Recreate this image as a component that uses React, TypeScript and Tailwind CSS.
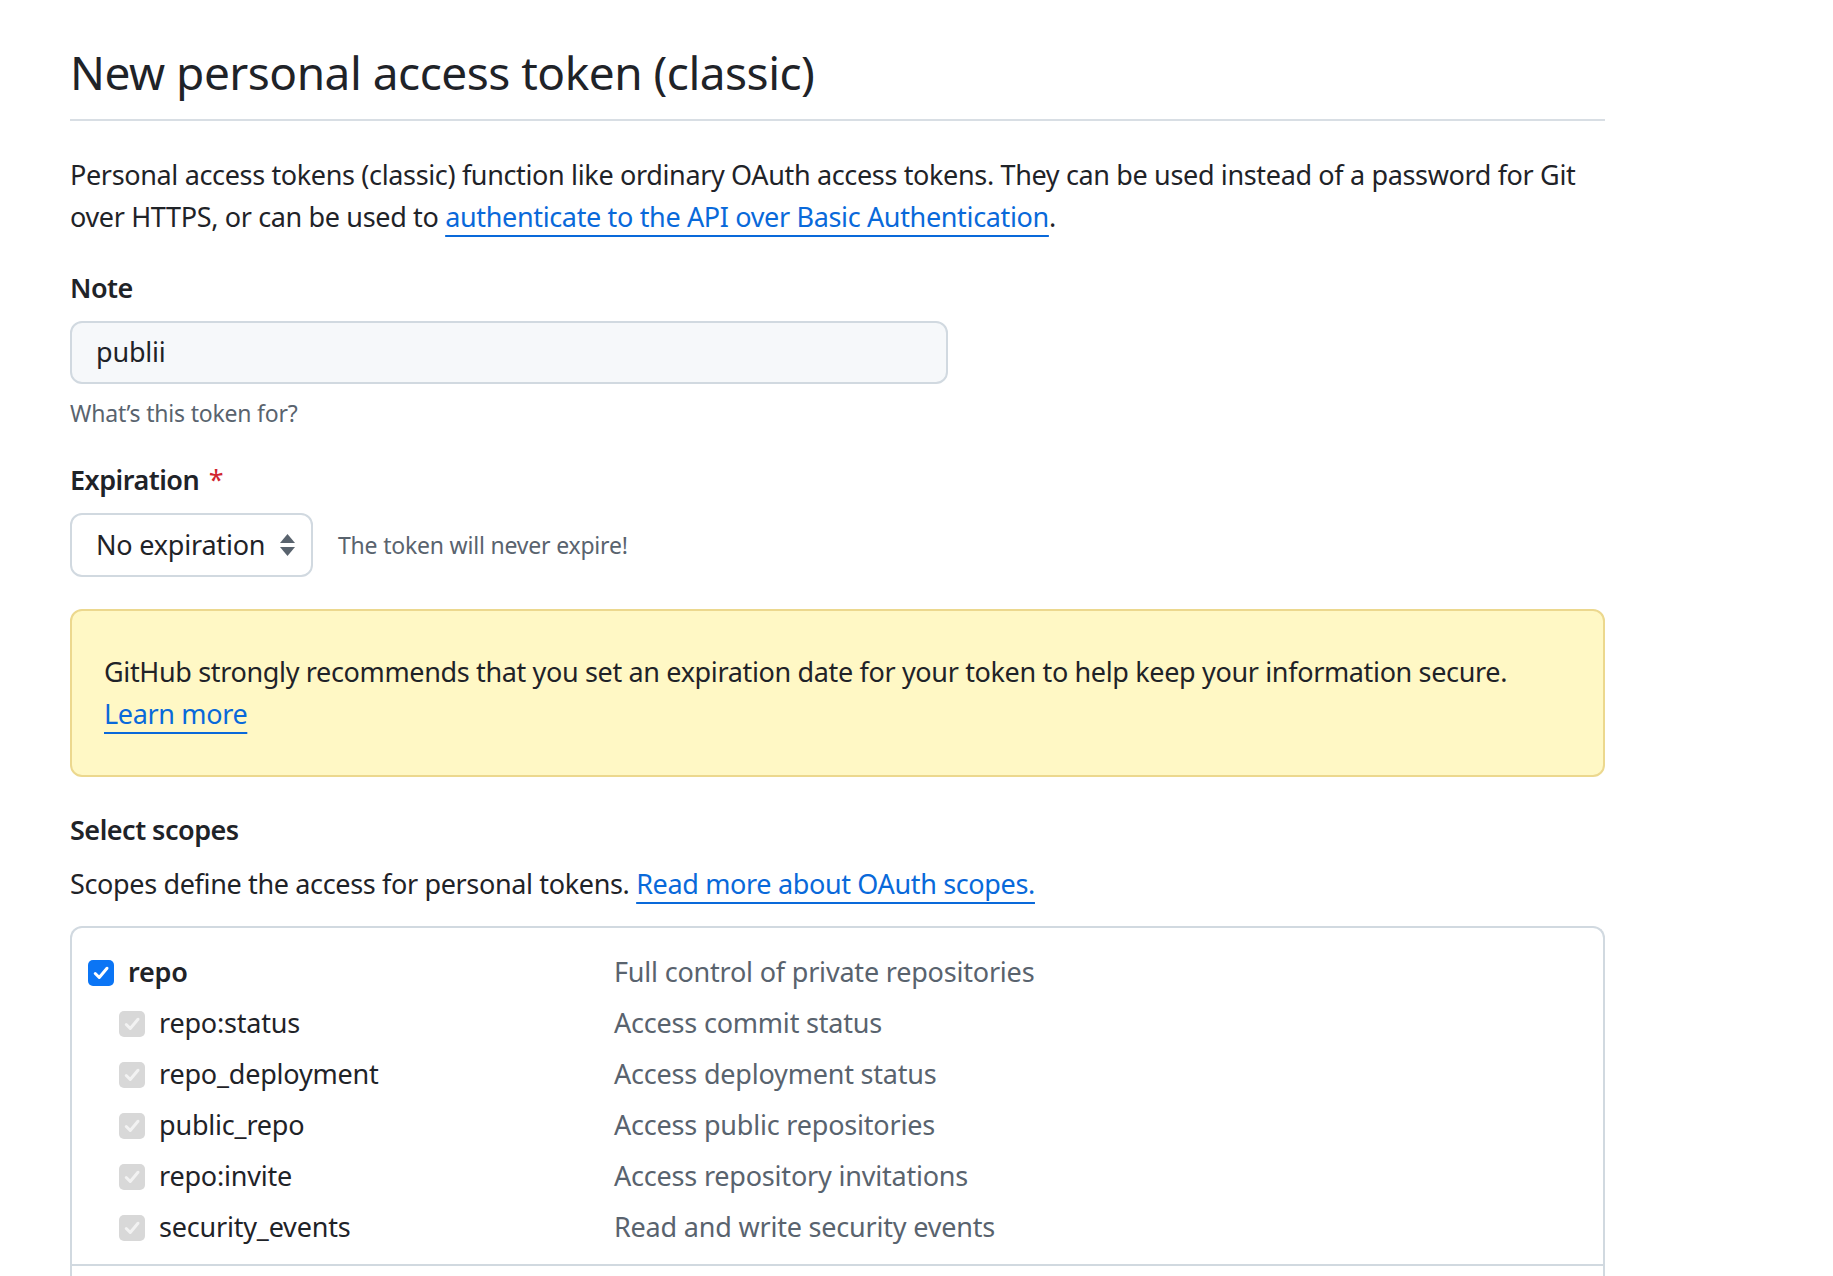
import React from 'react'

const scopes = [
  { name: 'repo:status', desc: 'Access commit status' },
  { name: 'repo_deployment', desc: 'Access deployment status' },
  { name: 'public_repo', desc: 'Access public repositories' },
  { name: 'repo:invite', desc: 'Access repository invitations' },
  { name: 'security_events', desc: 'Read and write security events' },
]

function Check({ disabled }: { disabled?: boolean }) {
  return (
    <span
      className={
        disabled
          ? 'flex h-[26px] w-[26px] shrink-0 items-center justify-center rounded-[5px] bg-[#d8d8d8]'
          : 'flex h-[26px] w-[26px] shrink-0 items-center justify-center rounded-[5px] bg-[#0b75f5]'
      }
    >
      <svg viewBox="0 0 16 16" className="h-[20px] w-[20px]" fill="none">
        <path
          d="M3.4 8.4 6.6 11.6 12.8 4.2"
          stroke={disabled ? '#f2f2f2' : '#ffffff'}
          strokeWidth="2.4"
          strokeLinecap="round"
          strokeLinejoin="round"
        />
      </svg>
    </span>
  )
}

export default function App() {
  return (
    <div className="min-h-screen bg-white px-[70px] font-['Noto_Sans','Open_Sans',sans-serif] text-[#1f2328]">
      <div className="w-[1535px]">
        {/* Header */}
        <h1 className="border-b-2 border-[#d8dee4] pt-[42px] pb-[17px] text-[46px] leading-[60px] font-normal tracking-[-0.5px]">
          New personal access token (classic)
        </h1>

        <p className="mt-[33px] text-[27px] leading-[42px] tracking-[-0.35px]">
          Personal access tokens (classic) function like ordinary OAuth access tokens. They can be used instead of a password for Git over HTTPS, or can be used to{' '}
          <a className="text-[#0969da] underline decoration-2 underline-offset-[8px]" href="#">
            authenticate to the API over Basic Authentication
          </a>
          .
        </p>

        {/* Note */}
        <div className="mt-[29px] text-[27px] leading-[42px] font-semibold tracking-[-0.5px]">Note</div>
        <div className="mt-[12px] flex h-[63px] w-[878px] items-center rounded-[12px] border-2 border-[#d1d9e0] bg-[#f6f8fa] px-[24px] text-[27px] tracking-[-0.2px]">
          publii
        </div>
        <div className="mt-[11px] text-[23px] leading-[36px] tracking-[-0.2px] text-[#59636e]">What’s this token for?</div>

        {/* Expiration */}
        <div className="mt-[28px] text-[27px] leading-[42px] font-semibold tracking-[-0.5px]">
          Expiration <span className="ml-[3px] font-normal text-[#d1242f]">*</span>
        </div>
        <div className="mt-[12px] flex items-center gap-[25px]">
          <div className="flex h-[64px] w-[243px] items-center justify-between rounded-[12px] border-2 border-[#d1d9e0] bg-white pr-[16px] pl-[24px] text-[27px] tracking-[-0.2px]">
            <span>No expiration</span>
            <svg viewBox="0 0 15 22" className="h-[22px] w-[15px]" fill="#59636e">
              <path d="M7.5 0 15 9H0Z" />
              <path d="M7.5 22 15 13H0Z" />
            </svg>
          </div>
          <span className="text-[23px] leading-[36px] tracking-[-0.2px] text-[#59636e]">The token will never expire!</span>
        </div>

        {/* Warning */}
        <div className="mt-[32px] rounded-[12px] border-2 border-[#ecd88e] bg-[#fff8c5] px-[32px] py-[40px] text-[27px] leading-[42px] tracking-[-0.35px]">
          <p>GitHub strongly recommends that you set an expiration date for your token to help keep your information secure.</p>
          <a className="text-[#0969da] underline decoration-2 underline-offset-[8px]" href="#">
            Learn more
          </a>
        </div>

        {/* Scopes */}
        <div className="mt-[32px] text-[27px] leading-[42px] font-semibold tracking-[-0.5px]">Select scopes</div>
        <p className="mt-[12px] text-[27px] leading-[42px] tracking-[-0.35px]">
          Scopes define the access for personal tokens.{' '}
          <a className="text-[#0969da] underline decoration-2 underline-offset-[8px]" href="#">
            Read more about OAuth scopes.
          </a>
        </p>

        <div className="mt-[21px] rounded-t-[12px] border-x-2 border-t-2 border-[#d1d9e0]">
          <div className="px-[16px] pt-[19px] pb-[11px] text-[27px] tracking-[-0.2px]">
            <div className="flex h-[51px] items-center">
              <div className="flex w-[526px] items-center gap-[14px]">
                <Check />
                <span className="font-semibold">repo</span>
              </div>
              <span className="text-[#59636e]">Full control of private repositories</span>
            </div>
            {scopes.map((s) => (
              <div key={s.name} className="flex h-[51px] items-center">
                <div className="flex w-[526px] items-center gap-[14px] pl-[31px]">
                  <Check disabled />
                  <span>{s.name}</span>
                </div>
                <span className="text-[#59636e]">{s.desc}</span>
              </div>
            ))}
          </div>
          <div className="h-[40px] border-t-2 border-[#d1d9e0]" />
        </div>
      </div>
    </div>
  )
}
